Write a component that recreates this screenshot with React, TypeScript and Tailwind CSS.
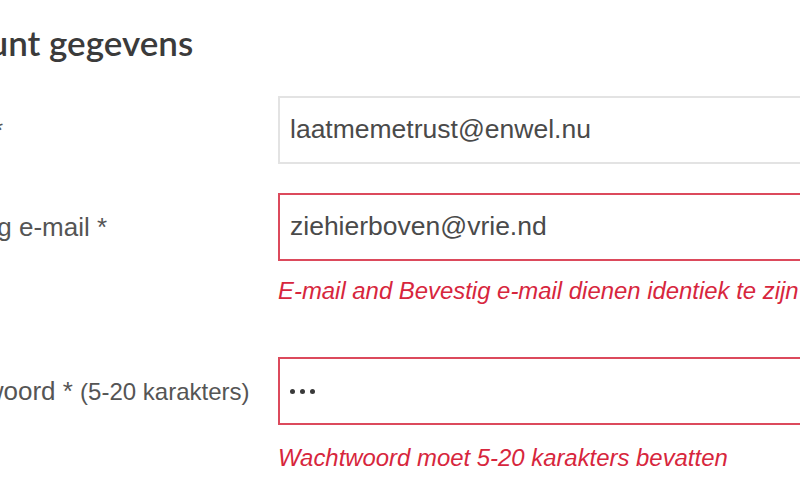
const labelCls = "text-[26px] leading-none text-[#555] whitespace-nowrap";
const inputBase =
  "h-[68px] w-[600px] flex items-center px-[10px] bg-white text-[26.5px] text-[#4a4a4a]";
const errorCls = "text-[23.9px] leading-[28px] italic text-[#d7263d] whitespace-nowrap";

function Dots() {
  return (
    <div className="flex items-center gap-[5px]">
      <span className="w-[5px] h-[5px] rounded-full bg-[#3a3a3a]" />
      <span className="w-[5px] h-[5px] rounded-full bg-[#3a3a3a]" />
      <span className="w-[5px] h-[5px] rounded-full bg-[#3a3a3a]" />
    </div>
  );
}

export default function App() {
  return (
    <div className="w-[800px] h-[480px] overflow-hidden bg-white font-['Liberation_Sans',sans-serif]">
      <div className="ml-[-88px] w-[1000px]">
        <h2 className="pt-[20px] h-[96px] text-[35px] leading-[44px] font-semibold text-[#3b3b3b] font-['Lato',sans-serif]">
          Account gegevens
        </h2>

        <div className="grid grid-cols-[366px_1fr]">
          <div className="flex items-center">
            <span className={labelCls}>E-mail *</span>
          </div>
          <div className={`${inputBase} border-2 border-[#e3e3e3]`}>laatmemetrust@enwel.nu</div>

          <div className="h-[29px] col-span-2" />

          <div className="flex items-center">
            <span className={labelCls}>Bevestig e-mail *</span>
          </div>
          <div className={`${inputBase} border-2 border-[#dc4a5c]`}>ziehierboven@vrie.nd</div>

          <div />
          <div className={`${errorCls} mt-[16px]`}>
            E-mail and Bevestig e-mail dienen identiek te zijn
          </div>

          <div className="h-[52px] col-span-2" />

          <div className="flex items-center">
            <span className={labelCls}>
              Wachtwoord * <span className="text-[24px]">(5-20 karakters)</span>
            </span>
          </div>
          <div className={`${inputBase} border-2 border-[#dc4a5c]`}>
            <Dots />
          </div>

          <div />
          <div className={`${errorCls} mt-[19px]`}>Wachtwoord moet 5-20 karakters bevatten</div>
        </div>
      </div>
    </div>
  );
}
